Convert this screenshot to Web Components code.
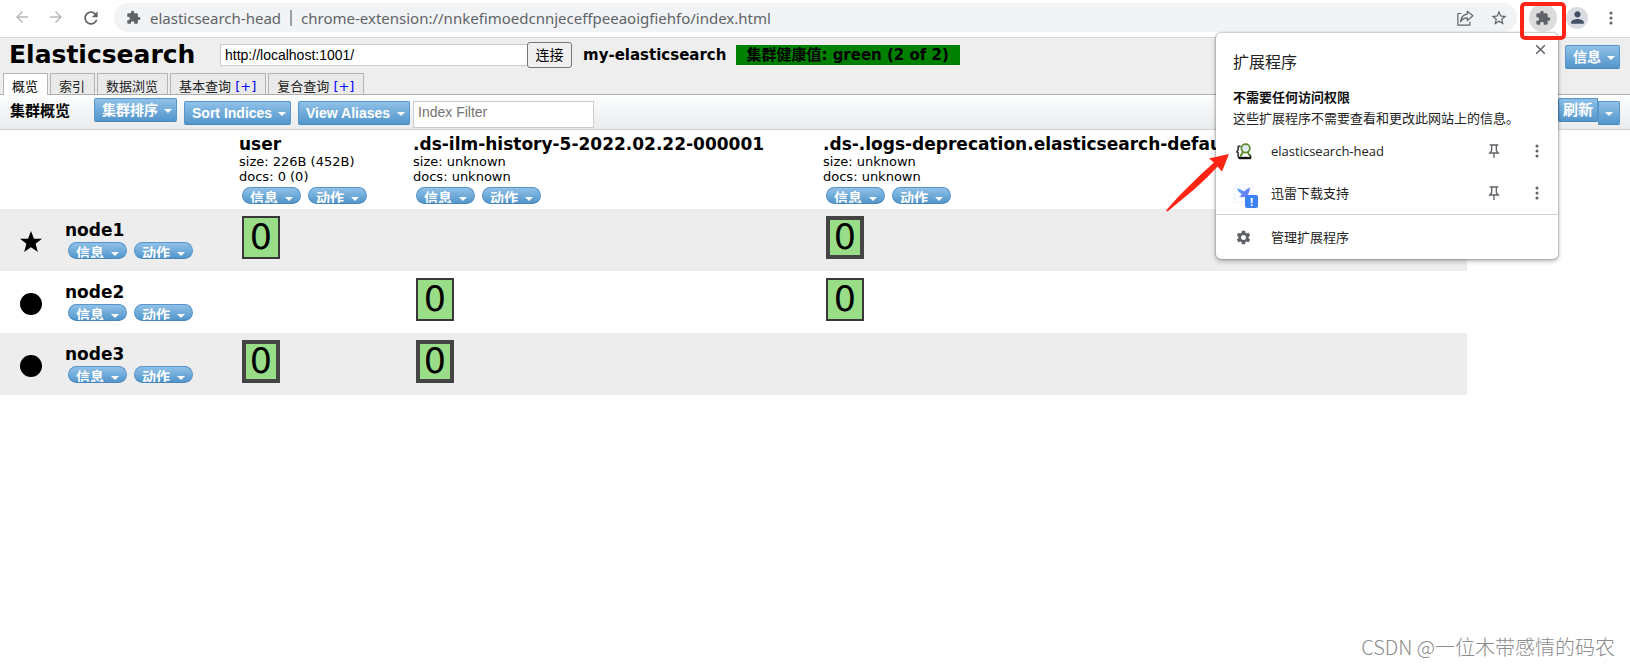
<!DOCTYPE html>
<html lang="zh-CN">
<head>
<meta charset="utf-8">
<title>elasticsearch-head</title>
<style>
  body { margin: 0; background: #fff; }
</style>
</head>
<body>
<head-app></head-app>

<script>
const define = (name, html, setup) => {
  const template = document.createElement('template');
  template.innerHTML = html;
  customElements.define(name, class extends HTMLElement {
    constructor() {
      super();
      this.attachShadow({ mode: 'open' }).append(template.content.cloneNode(true));
    }
    connectedCallback() {
      if (setup) setup(this, this.shadowRoot);
    }
  });
};

/* Icon set: every glyph is drawn on a 24-unit grid and takes the text colour. */
const ICONS = {
  back: '<path d="M20 11H7.83l5.59-5.59L12 4l-8 8 8 8 1.41-1.41L7.83 13H20v-2z"/>',
  forward: '<path d="M4 11h12.17l-5.59-5.59L12 4l8 8-8 8-1.41-1.41L16.17 13H4v-2z"/>',
  reload: '<path d="M17.65 6.35C16.2 4.9 14.21 4 12 4c-4.42 0-7.99 3.58-7.99 8s3.57 8 7.99 8c3.73 0 6.84-2.55 7.73-6h-2.08c-.82 2.33-3.04 4-5.65 4-3.31 0-6-2.69-6-6s2.69-6 6-6c1.66 0 3.14.69 4.22 1.78L13 11h7V4l-2.35 2.35z"/>',
  puzzle: '<path d="M20.5 11H19V7c0-1.1-.9-2-2-2h-4V3.5C13 2.12 11.88 1 10.5 1S8 2.12 8 3.5V5H4c-1.1 0-1.99.9-1.99 2v3.8H3.5c1.49 0 2.7 1.21 2.7 2.7s-1.21 2.7-2.7 2.7H2V20c0 1.1.9 2 2 2h3.8v-1.5c0-1.49 1.21-2.7 2.7-2.7 1.49 0 2.7 1.21 2.7 2.7V22H17c1.1 0 2-.9 2-2v-4h1.5c1.38 0 2.5-1.12 2.5-2.5S21.88 11 20.5 11z"/>',
  share: '<g fill="none" stroke="currentColor" stroke-width="1.6" stroke-linejoin="round"><path d="M7 6H2.500V21.500H18.500V17"/><path d="M15 3l7.500 6L15 15.500V11.800C10.500 11.800 8 13.500 6 17C6.500 11.500 9.500 7.500 15 6.800z"/></g>',
  star: '<path d="M22 9.24l-7.19-.62L12 2 9.19 8.63 2 9.24l5.46 4.73L5.82 21 12 17.27 18.18 21l-1.63-7.03L22 9.24zM12 15.4l-3.76 2.27 1-4.28-3.32-2.88 4.38-.38L12 6.1l1.71 4.04 4.38.38-3.32 2.88 1 4.28L12 15.4z"/>',
  person: '<path d="M12 12c2.21 0 4-1.79 4-4s-1.79-4-4-4-4 1.79-4 4 1.79 4 4 4zm0 2c-2.67 0-8 1.340-8 4v2h16v-2c0-2.660-5.330-4-8-4z"/>',
  dots: '<circle cx="12" cy="4.500" r="2.300"/><circle cx="12" cy="12" r="2.300"/><circle cx="12" cy="19.500" r="2.300"/>',
  close: '<path d="M4 4L20 20M20 4L4 20" fill="none" stroke="currentColor" stroke-width="2.800"/>',
  pin: '<path d="M5.500 3H18.500M8.500 3V11.500L5.500 15H18.500L15.500 11.500V3M12 15V22.500" fill="none" stroke="currentColor" stroke-width="2"/>',
  gear: '<path d="M19.14 12.94c.04-.3.06-.61.06-.94 0-.32-.02-.64-.07-.94l2.03-1.58c.18-.14.23-.41.12-.61l-1.92-3.32c-.12-.22-.37-.29-.59-.22l-2.39.96c-.5-.38-1.03-.7-1.62-.94l-.36-2.54c-.04-.24-.24-.41-.48-.41h-3.84c-.24 0-.43.17-.47.41l-.36 2.54c-.59.24-1.13.57-1.62.94l-2.39-.96c-.22-.08-.47 0-.59.22L2.74 8.87c-.12.21-.08.47.12.61l2.03 1.58c-.05.3-.09.63-.09.94s.02.64.07.94l-2.03 1.58c-.18.14-.23.41-.12.61l1.92 3.32c.12.22.37.29.59.22l2.39-.96c.5.38 1.03.7 1.62.94l.36 2.54c.05.24.24.41.48.41h3.84c.24 0 .44-.17.47-.41l.36-2.54c.59-.24 1.13-.56 1.62-.94l2.39.96c.22.08.47 0 .59-.22l1.92-3.32c.12-.22.07-.47-.12-.61l-2.01-1.58zM12 15.600c-1.980 0-3.600-1.620-3.600-3.600s1.620-3.600 3.600-3.600 3.600 1.620 3.600 3.600-1.620 3.600-3.600 3.600z"/>',
  head: '<g fill="none" stroke-linejoin="round"><path d="M8 4.500H4.500V9.500L2.500 12.500L4.500 14V19.500L7 22H22V18.500L20 16" stroke="#333" stroke-width="2.200"/><path d="M5 21H22" stroke="#111" stroke-width="3"/><circle cx="15" cy="7.500" r="6" fill="#e3ecf6" stroke="#5d8a2b" stroke-width="2.400"/><path d="M11.500 12.500L7.500 19M18 12.500L20 17" stroke="#5d8a2b" stroke-width="2.800"/></g>',
  bird: '<defs><linearGradient id="wing" x1="0" y1="0" x2="1" y2="1"><stop offset="0" stop-color="#37a6ff"/><stop offset="1" stop-color="#8a6cf5"/></linearGradient></defs><rect x="-1" y="-1" width="26" height="26" rx="3" fill="#fbfcff" stroke="#eef0f8"/><path d="M3 5C7 6 10 7 13 9C15 6 18 5 22 3C20 6 21 8 19 12C17 16 12 19 6 16C9 15 10 14 9 12C6 11 4 8 3 5z" fill="url(#wing)"/>',
  master: '<path d="M12 0L15.200 8.500H24L17 13.800L19.500 23L12 17.600L4.500 23L7 13.800L0 8.500H8.800z"/>',
  node: '<circle cx="12" cy="12" r="12"/>'
};

define('ui-icon', `
  <style>
    :host { display: block; flex: none; width: var(--size, 16px); height: var(--size, 16px); }
    svg { display: block; width: 100%; height: 100%; fill: currentColor; overflow: visible; }
  </style>
  <svg viewBox="0 0 24 24" aria-hidden="true"></svg>`,
  (host, root) => { root.querySelector('svg').innerHTML = ICONS[host.getAttribute('name')]; });

define('menu-button', `
  <style>
    :host { display: block; flex: none; }
    button {
      display: flex; align-items: center; gap: 6px; box-sizing: border-box; width: 100%; height: 24px;
      margin: 0; padding: 0 4px 0 7px; overflow: hidden;
      border: 1px solid #5795cb; border-bottom-color: #4a86b8; border-radius: 2px;
      background: linear-gradient(#8fc1e8, #5396cb);
      color: #fff; font: bold 14px/20px "Liberation Sans", "Noto Sans CJK SC", sans-serif; white-space: nowrap;
    }
    button::after {
      content: ""; border: 4px solid transparent; border-top-color: #fff; border-bottom: 0; margin-top: 2px;
    }
    span { margin-right: auto; }
    :host([plain]) button::after { display: none; }
    :host([plain]) button { padding: 0 4px; border-radius: 2px 0 0 2px; }
    :host([caret]) button { padding: 0 6px; gap: 0; border-radius: 0 2px 2px 0; }
    :host([large]) button { font-size: 15px; }
    :host([pill]) button {
      height: 17px; padding: 0 7px; border-radius: 9px; align-items: flex-start;
    }
    :host([pill]) button::after { margin-top: 9px; }
  </style>
  <button type="button"><span><slot></slot></span></button>`,
  (host, root) => {
    const button = root.querySelector('button');
    if (!host.hasAttribute('plain')) button.setAttribute('aria-haspopup', 'menu');
    if (host.hasAttribute('caret')) button.setAttribute('aria-label', host.getAttribute('caret'));
  });

define('item-actions', `
  <style>
    :host { display: flex; gap: 7px; padding-left: 3px; }
    menu-button { width: 59px; }
  </style>
  <menu-button pill>信息</menu-button><menu-button pill>动作</menu-button>`);

define('browser-bar', `
  <style>
    :host {
      display: flex; align-items: center; box-sizing: border-box; height: 38px; padding: 0 11px 2px 13px;
      border-bottom: 1px solid #d5d7da; background: #fff; color: #5f6368;
      font: 15px/20px "Noto Sans", sans-serif;
    }
    button { display: flex; padding: 0; border: 0; background: none; color: inherit; }
    .nav { display: flex; gap: 16px; }
    .nav button { --size: 18px; }
    .nav .off { color: #bababc; }
    .nav button:last-child { --size: 20px; }
    .omnibox {
      display: flex; flex: 1; align-items: center; height: 29px; margin: 0 12px 0 13px; padding: 0 9px 0 12px;
      border-radius: 15px; background: #f1f3f4;
    }
    .omnibox ui-icon { --size: 15px; }
    .site { padding: 0 9px; border-right: 2px solid #9aa0a6; line-height: 16px; }
    .url { flex: 1; padding-left: 9px; }
    .omnibox button { margin-left: 16px; }
    .omnibox button ui-icon { --size: 18px; }
    .ext {
      position: relative; z-index: 1; align-items: center; justify-content: center; width: 28px; height: 28px;
      border-radius: 50%; background: #dcdcdc;
    }
    .ext::after {
      content: ""; position: absolute; inset: -2px -9px -8px -9px; border: 4px solid #fb2416; border-radius: 5px;
    }
    .avatar {
      align-items: center; justify-content: center; width: 22px; height: 22px; margin: 0 15px 0 9px;
      border-radius: 50%; background: #dadde3; color: #435065;
    }
    .avatar ui-icon { --size: 19px; }
    .more { --size: 16px; }
  </style>
  <div class="nav">
    <button class="off" aria-label="后退"><ui-icon name="back"></ui-icon></button>
    <button class="off" aria-label="前进"><ui-icon name="forward"></ui-icon></button>
    <button aria-label="刷新页面"><ui-icon name="reload"></ui-icon></button>
  </div>
  <div class="omnibox">
    <ui-icon name="puzzle"></ui-icon>
    <span class="site">elasticsearch-head</span>
    <span class="url">chrome-extension://nnkefimoedcnnjeceffpeeaoigfiehfo/index.html</span>
    <button aria-label="分享"><ui-icon name="share"></ui-icon></button>
    <button aria-label="收藏"><ui-icon name="star"></ui-icon></button>
  </div>
  <button class="ext" aria-label="扩展程序菜单"><ui-icon name="puzzle"></ui-icon></button>
  <button class="avatar" aria-label="用户"><ui-icon name="person"></ui-icon></button>
  <button class="more" aria-label="更多"><ui-icon name="dots"></ui-icon></button>`);

define('app-header', `
  <style>
    :host {
      display: block; border-bottom: 1px solid #b0b0b0; background: #eee;
      font: 13px/20px "DejaVu Sans", "Noto Sans CJK SC", sans-serif;
    }
    .top { display: flex; align-items: flex-start; box-sizing: border-box; height: 35px; padding: 4px 10px 0 9px; }
    h1 { width: 211px; margin: 0; font-size: 25px; line-height: 26px; }
    form { display: flex; align-items: center; }
    input {
      box-sizing: border-box; width: 307px; height: 22px; padding: 0 4px; border: 1px solid #ccc; border-right: 0;
      background: #fff; font: 14px/18px "Liberation Sans", sans-serif;
    }
    form button {
      box-sizing: border-box; width: 45px; height: 26px; padding: 0; border: 1px solid #767676; border-radius: 3px;
      background: #efefef; font: 14px/20px "Liberation Sans", "Noto Sans CJK SC", sans-serif;
    }
    strong { margin: 3px 10px 0 11px; font-size: 15px; line-height: 20px; }
    .health { margin: 3px auto 0 0; padding: 0 11px 0 10px; background: green; font-size: 15px; font-weight: bold; line-height: 20px; }
    menu-button { width: 55px; margin-top: 3px; }
    nav { display: flex; gap: 2px; padding-left: 3px; }
    .tab {
      height: 20px; padding: 0 9px 0 8px; border: 1px solid #b4b4b4; border-bottom: 0; background: #eaeaea;
      white-space: nowrap; overflow: hidden; line-height: 26px; color: #222;
    }
    .tab.on { margin-bottom: -1px; padding-bottom: 1px; background: #fff; color: #000; }
    a { color: #00f; text-decoration: none; }
  </style>
  <div class="top">
    <h1>Elasticsearch</h1>
    <form onsubmit="return false">
      <input type="text" aria-label="集群地址" value="http://localhost:1001/"><button>连接</button>
    </form>
    <strong>my-elasticsearch</strong>
    <span class="health">集群健康值: green (2 of 2)</span>
    <menu-button>信息</menu-button>
  </div>
  <nav>
    <div class="tab on">概览</div>
    <div class="tab">索引</div>
    <div class="tab">数据浏览</div>
    <div class="tab">基本查询 <a href="#query">[+]</a></div>
    <div class="tab">复合查询 <a href="#any">[+]</a></div>
  </nav>`);

define('overview-toolbar', `
  <style>
    :host {
      display: flex; align-items: flex-start; box-sizing: border-box; height: 35px; padding: 3px 10px 0 10px;
      border-bottom: 1px solid #cdd3d8; background: linear-gradient(#fdfefe, #e9ebed);
      font: 14px/20px "Liberation Sans", "Noto Sans CJK SC", sans-serif;
    }
    h2 { width: 84px; margin: 3px 0 0; font-size: 15px; line-height: 20px; }
    .latin { margin: 3px 0 0 7px; }
    .cluster { width: 83px; }
    .sort { width: 107px; }
    .alias { width: 112px; }
    input {
      box-sizing: border-box; width: 181px; height: 27px; margin: 3px auto 0 3px; padding: 0 4px 5px;
      border: 1px solid #ccc; background: #fff; font: inherit;
    }
    input::placeholder { color: #757575; }
    .split { margin: 3px 0 0; width: 22px; }
  </style>
  <h2>集群概览</h2>
  <menu-button class="cluster">集群排序</menu-button>
  <menu-button class="latin sort">Sort Indices</menu-button>
  <menu-button class="latin alias">View Aliases</menu-button>
  <input type="text" aria-label="Index Filter" placeholder="Index Filter">
  <menu-button plain large>刷新</menu-button><menu-button class="split" caret="刷新间隔"></menu-button>`);

define('shard-box', `
  <style>
    :host { display: block; padding-left: 3px; }
    button {
      display: block; box-sizing: border-box; width: 38px; height: 43px; padding: 0; border: 2px solid #383838;
      background: #99dd88; color: #000; font: 35px/39px "DejaVu Sans", sans-serif; text-align: center;
    }
    :host([primary]) button { border: 4px solid #444; line-height: 35px; }
  </style>
  <button type="button"><slot></slot></button>`);

define('cluster-table', `
  <style>
    :host { display: block; font: 13px/15px "DejaVu Sans", "Noto Sans CJK SC", sans-serif; color: #000; }
    table { width: 90%; border-collapse: collapse; table-layout: fixed; text-align: left; }
    th, td { padding: 0; vertical-align: top; font-weight: normal; white-space: nowrap; }
    .c-mark { width: 65px; } .c-node { width: 174px; } .c-user { width: 174px; } .c-ilm { width: 410px; }
    thead tr { height: 79px; }
    tbody tr { height: 62px; }
    tbody tr:nth-child(odd) { background: #ededed; }
    h3 { margin: 0; font-size: 17px; line-height: 20px; }
    thead h3 { padding-top: 4px; }
    thead item-actions { padding-top: 3px; }
    tbody h3 { padding-top: 11px; }
    tbody item-actions { padding-top: 2px; }
    td { padding-top: 7px; }
    td.mark { padding: 22px 0 0 20px; --size: 22px; }
  </style>
  <table>
    <colgroup><col class="c-mark"><col class="c-node"><col class="c-user"><col class="c-ilm"><col></colgroup>
    <thead>
      <tr>
        <td></td><td></td>
        <th scope="col"><h3>user</h3>size: 226B (452B)<br>docs: 0 (0)<item-actions></item-actions></th>
        <th scope="col"><h3>.ds-ilm-history-5-2022.02.22-000001</h3>size: unknown<br>docs: unknown<item-actions></item-actions></th>
        <th scope="col"><h3>.ds-.logs-deprecation.elasticsearch-default</h3>size: unknown<br>docs: unknown<item-actions></item-actions></th>
      </tr>
    </thead>
    <tbody>
      <tr>
        <td class="mark"><ui-icon name="master"></ui-icon></td>
        <th scope="row"><h3>node1</h3><item-actions></item-actions></th>
        <td><shard-box>0</shard-box></td><td></td><td><shard-box primary>0</shard-box></td>
      </tr>
      <tr>
        <td class="mark"><ui-icon name="node"></ui-icon></td>
        <th scope="row"><h3>node2</h3><item-actions></item-actions></th>
        <td></td><td><shard-box>0</shard-box></td><td><shard-box>0</shard-box></td>
      </tr>
      <tr>
        <td class="mark"><ui-icon name="node"></ui-icon></td>
        <th scope="row"><h3>node3</h3><item-actions></item-actions></th>
        <td><shard-box primary>0</shard-box></td><td><shard-box primary>0</shard-box></td><td></td>
      </tr>
    </tbody>
  </table>`);

define('extension-row', `
  <style>
    :host { display: flex; align-items: center; height: 42px; padding: 0 13px 0 19px; }
    .icon { position: relative; width: 36px; --size: 17px; }
    ::slotted(b) {
      position: absolute; left: 10px; top: 10px; width: 13px; height: 13px; border-radius: 2px;
      background: #3b82f6; color: #fff; font-size: 11px; line-height: 13px; text-align: center;
    }
    .name { flex: 1; }
    button { display: flex; padding: 0; border: 0; background: none; color: #5f6368; }
    button + button { margin-left: 27px; }
  </style>
  <span class="icon"><slot name="icon"></slot><slot name="badge"></slot></span>
  <span class="name"><slot></slot></span>
  <button aria-label="固定"><ui-icon name="pin"></ui-icon></button>
  <button aria-label="更多操作"><ui-icon name="dots"></ui-icon></button>`);

define('extension-popup', `
  <style>
    :host {
      display: block; box-sizing: border-box; width: 342px; border-radius: 5px; background: #fff;
      box-shadow: 0 0 2px rgba(0,0,0,.5), 0 2px 5px rgba(0,0,0,.3); color: #222;
      font: 13px/20px "Open Sans", "Noto Sans CJK SC", sans-serif;
    }
    header { display: flex; padding: 10px 11px 0 17px; }
    h2 { flex: 1; margin: 8px 0 0; font-size: 16px; font-weight: normal; line-height: 22px; }
    header button { display: flex; height: 13px; padding: 0; border: 0; background: none; color: #5f6368; --size: 13px; }
    .note { margin: 14px 0 0; padding: 0 0 1px 17px; line-height: 21px; }
    .note b { display: block; color: #111; }
    .manage {
      display: flex; align-items: center; width: 100%; height: 45px; padding: 0 19px; border: 0; border-top: 1px solid #d0d2d5;
      background: none; color: inherit; font: inherit; --size: 17px;
    }
    .manage ui-icon { margin-right: 19px; color: #5f6368; }
  </style>
  <header><h2>扩展程序</h2><button aria-label="关闭"><ui-icon name="close"></ui-icon></button></header>
  <p class="note"><b>不需要任何访问权限</b>这些扩展程序不需要查看和更改此网站上的信息。</p>
  <extension-row><ui-icon slot="icon" name="head"></ui-icon>elasticsearch-head</extension-row>
  <extension-row><ui-icon slot="icon" name="bird"></ui-icon>迅雷下载支持<b slot="badge">!</b></extension-row>
  <button class="manage"><ui-icon name="gear"></ui-icon>管理扩展程序</button>`);

define('head-app', `
  <style>
    :host { display: block; position: relative; min-height: 100vh; overflow: hidden; }
    extension-popup { position: absolute; top: 33px; right: 72px; }
    .arrow { position: absolute; top: 154px; right: 401px; width: 63px; height: 58px; fill: #ff2413; }
    .mark {
      position: absolute; right: 15px; bottom: 4px; margin: 0; color: #8c8c8c;
      font: 20px/30px "Noto Sans CJK SC", sans-serif; font-weight: 300;
    }
  </style>
  <browser-bar></browser-bar>
  <app-header></app-header>
  <overview-toolbar></overview-toolbar>
  <cluster-table></cluster-table>
  <extension-popup></extension-popup>
  <svg class="arrow" viewBox="0 0 63 58" aria-hidden="true"><path d="M63 0L43 4.500L48 8.500C33 22 16 38 0 56.500L1.500 57.500C19 43 38 28 51.500 12.500L56 17.500z"/></svg>
  <p class="mark">CSDN @一位木带感情的码农</p>`);
</script>
</body>
</html>
